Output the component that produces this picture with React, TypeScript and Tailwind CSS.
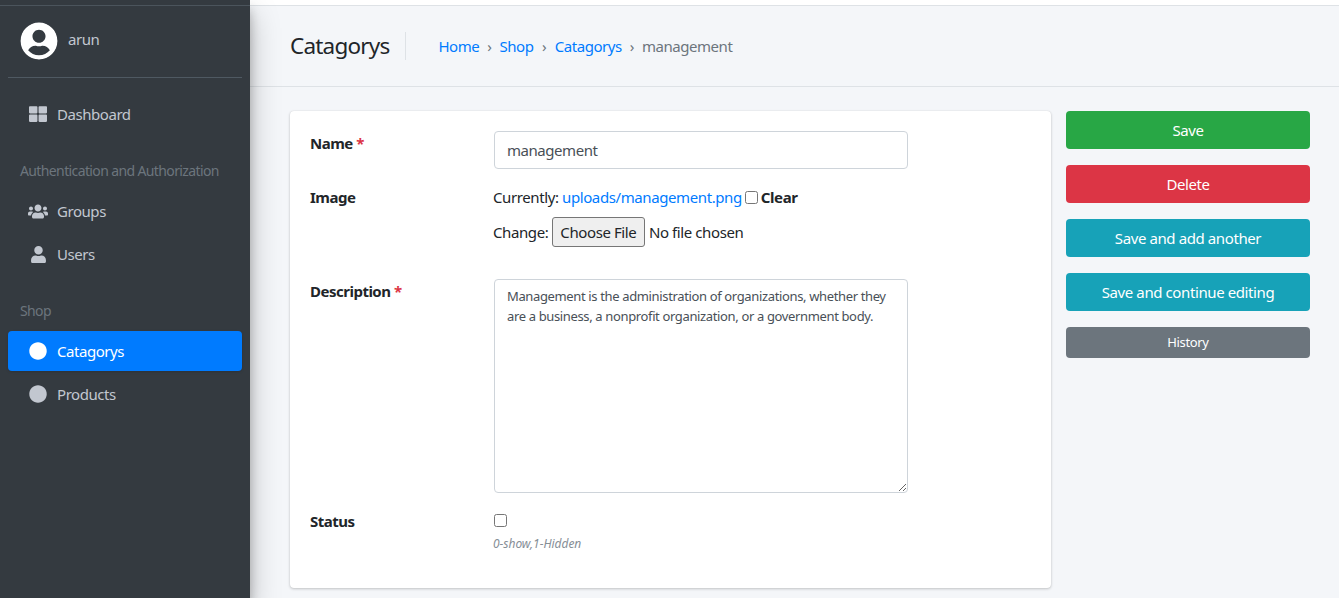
import { FaUsers, FaUser, FaCircle, FaThLarge, FaUserCircle } from "react-icons/fa";

const FONT = "font-['Noto_Sans','Liberation_Sans',sans-serif]";

function NavItem({
  icon,
  label,
  active = false,
}: {
  icon: React.ReactNode;
  label: string;
  active?: boolean;
}) {
  return (
    <div
      className={`mx-2 flex h-10 items-center rounded-[4px] pl-[20px] text-[15px] tracking-[-0.45px] mb-[3px] ${
        active ? "bg-[#007bff] text-white shadow-sm" : "text-[#c2c7d0]"
      }`}
    >
      <span className="flex w-5 items-center justify-center">{icon}</span>
      <span className="ml-[9px]">{label}</span>
    </div>
  );
}

function SideButton({ label, color, small = false }: { label: string; color: string; small?: boolean }) {
  return (
    <button
      type="button"
      className={`w-full rounded-[4px] text-white ${color} ${
        small ? "h-[31px] text-[13px] tracking-[-0.35px]" : "h-[38px] text-[15px] tracking-[-0.4px]"
      }`}
    >
      {label}
    </button>
  );
}

export default function App() {
  return (
    <div className={`flex h-[598px] w-[1339px] overflow-hidden bg-[#f4f6f9] ${FONT}`}>
      {/* Sidebar */}
      <aside className="relative z-10 h-full w-[250px] shrink-0 bg-[#343a40] shadow-[0_14px_28px_rgba(0,0,0,0.25),0_10px_10px_rgba(0,0,0,0.22)]">
        <div className="h-[6px] border-b border-[#4b545c]" />
        <div className="mx-2 flex h-[72px] items-center border-b border-[#4f5962] pl-3 pb-[1px]">
          <FaUserCircle className="size-[38px] rounded-full text-white" />
          <span className="ml-[10px] -mt-[3px] text-[15px] tracking-[-0.45px] text-[#c2c7d0]">arun</span>
        </div>
        <div className="mt-4">
          <NavItem icon={<FaThLarge className="size-[18px]" />} label="Dashboard" />
        </div>
        <div className="ml-5 mt-[27px] mb-[10px] text-[14px] tracking-[-0.62px] leading-[20px] text-[#6c757d]">
          Authentication and Authorization
        </div>
        <NavItem icon={<FaUsers className="size-[23px]" />} label="Groups" />
        <NavItem icon={<FaUser className="size-[17px]" />} label="Users" />
        <div className="ml-5 mt-[27px] mb-[10px] text-[14px] tracking-[-0.62px] leading-[20px] text-[#6c757d]">
          Shop
        </div>
        <NavItem icon={<FaCircle className="size-[18px]" />} label="Catagorys" active />
        <NavItem icon={<FaCircle className="size-[18px]" />} label="Products" />
      </aside>

      {/* Main */}
      <main className="flex min-w-0 flex-1 flex-col">
        <div className="h-[6px] shrink-0 border-b border-[#dee2e6] bg-white" />
        <header className="flex h-[81px] shrink-0 items-center border-b border-[#dee2e6] pl-10">
          <h1 className="text-[22.5px] tracking-[-0.8px] text-[#212529]">Catagorys</h1>
          <div className="ml-4 h-7 border-l border-[#dee2e6]" />
          <nav className="ml-[32px] flex items-center text-[15px] tracking-[-0.45px]">
            <a className="text-[#007bff]">Home</a>
            <span className="mx-[8px] text-[#6c757d]">›</span>
            <a className="text-[#007bff]">Shop</a>
            <span className="mx-[8.5px] text-[#6c757d]">›</span>
            <a className="text-[#007bff]">Catagorys</a>
            <span className="mx-[8px] text-[#6c757d]">›</span>
            <span className="text-[#6c757d]">management</span>
          </nav>
        </header>

        <div className="flex items-start pl-10 pt-6">
          {/* Form card */}
          <section className="h-[477px] w-[761px] rounded-[4px] bg-white px-5 pt-5 shadow-[0_0_1px_rgba(0,0,0,0.13),0_1px_3px_rgba(0,0,0,0.2)]">
            <div className="flex h-[54px]">
              <label className="w-[184px] text-[15px] font-bold leading-6 tracking-[-0.5px] text-[#212529]">
                Name <span className="text-[#dc3545]">*</span>
              </label>
              <input
                defaultValue="management"
                className="h-[38px] w-[414px] rounded-[4px] border border-[#ced4da] px-3 text-[15px] tracking-[-0.45px] text-[#495057]"
              />
            </div>
            <div className="flex h-[94px]">
              <label className="w-[184px] text-[15px] font-bold leading-6 tracking-[-0.5px] text-[#212529]">Image</label>
              <div className="-ml-[1px] text-[15px] tracking-[-0.4px] text-[#212529]">
                <div className="flex h-6 items-center">
                  Currently:&nbsp;<a className="text-[#007bff]">uploads/management.png</a>
                  <input type="checkbox" className="ml-[3px] mr-[3px] size-[13px]" />
                  <span className="font-bold">Clear</span>
                </div>
                <div className="mt-[8px] flex h-[30px] items-center">
                  Change:&nbsp;
                  <input
                    type="file"
                    className="w-[210px] file:mr-[4px] file:h-[30px] file:rounded-[3px] file:border file:border-[#767676] file:bg-[#efefef] file:px-[7.5px]"
                  />
                </div>
              </div>
            </div>
            <div className="flex h-[230px]">
              <label className="w-[184px] text-[15px] font-bold leading-6 tracking-[-0.5px] text-[#212529]">
                Description <span className="text-[#dc3545]">*</span>
              </label>
              <textarea
                defaultValue="Management is the administration of organizations, whether they are a business, a nonprofit organization, or a government body."
                className="h-[214px] w-[414px] rounded-[4px] border border-[#ced4da] px-3 py-[6px] text-[13px] leading-[20px] tracking-[-0.36px] text-[#495057]"
              />
            </div>
            <div className="flex">
              <label className="w-[184px] text-[15px] font-bold leading-6 tracking-[-0.5px] text-[#212529]">Status</label>
              <div>
                <input type="checkbox" className="mt-[5px] block size-[13px]" />
                <div className="-ml-[1px] mt-[8px] text-[12px] italic tracking-[-0.03px] text-[#868e96]">0-show,1-Hidden</div>
              </div>
            </div>
          </section>

          {/* Actions */}
          <div className="ml-[15px] flex w-[244px] flex-col gap-4">
            <SideButton label="Save" color="bg-[#28a745]" />
            <SideButton label="Delete" color="bg-[#dc3545]" />
            <SideButton label="Save and add another" color="bg-[#17a2b8]" />
            <SideButton label="Save and continue editing" color="bg-[#17a2b8]" />
            <SideButton label="History" color="bg-[#6c757d]" small />
          </div>
        </div>
      </main>
    </div>
  );
}
